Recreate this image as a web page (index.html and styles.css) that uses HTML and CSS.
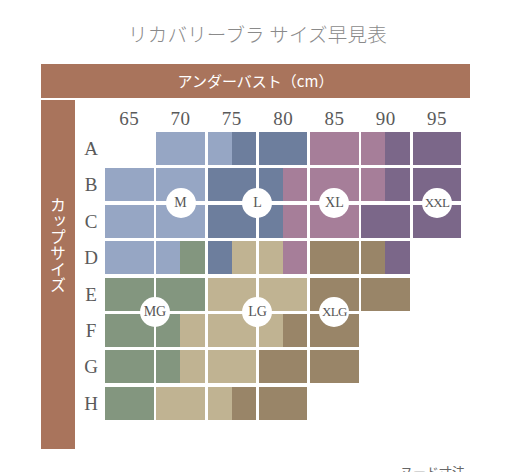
FILE: index.html
```html
<!DOCTYPE html>
<html lang="ja">
<head>
<meta charset="utf-8">
<link rel="stylesheet" href="styles.css">
</head>
<body>
<h1 class="title">リカバリーブラ サイズ早見表</h1>
<div class="chart">
  <div class="header">アンダーバスト（cm）</div>
  <div class="body">
    <div class="side"><span class="side-text">カップサイズ</span></div>
    <div class="table">
      <div></div>
      <div class="col">65</div><div class="col">70</div><div class="col">75</div><div class="col">80</div><div class="col">85</div><div class="col">90</div><div class="col">95</div>

      <div class="row">A</div>
      <div></div><div class="c m"></div><div class="c m-l"></div><div class="c l"></div><div class="c xl"></div><div class="c xl-xxl"></div><div class="c xxl"></div>

      <div class="row">B</div>
      <div class="c m"></div><div class="c m"></div><div class="c l"></div><div class="c l-xl"></div><div class="c xl"></div><div class="c xl-xxl"></div><div class="c xxl"></div>

      <div class="row">C</div>
      <div class="c m"></div><div class="c m"></div><div class="c l"></div><div class="c l-xl"></div><div class="c xl"></div><div class="c xxl"></div><div class="c xxl"></div>

      <div class="row">D</div>
      <div class="c m"></div><div class="c m-mg"></div><div class="c l-lg"></div><div class="c lg-xl"></div><div class="c xlg"></div><div class="c xlg-xxl"></div><div></div>

      <div class="row">E</div>
      <div class="c mg"></div><div class="c mg"></div><div class="c lg"></div><div class="c lg"></div><div class="c xlg"></div><div class="c xlg"></div><div></div>

      <div class="row">F</div>
      <div class="c mg"></div><div class="c mg-lg"></div><div class="c lg"></div><div class="c lg-xlg"></div><div class="c xlg"></div><div></div><div></div>

      <div class="row">G</div>
      <div class="c mg"></div><div class="c mg-lg"></div><div class="c lg"></div><div class="c xlg"></div><div class="c xlg"></div><div></div><div></div>

      <div class="row">H</div>
      <div class="c mg"></div><div class="c lg"></div><div class="c lg-xlg"></div><div class="c xlg"></div><div></div><div></div><div></div>

      <div class="badge b-m">M</div>
      <div class="badge b-l">L</div>
      <div class="badge b-xl">XL</div>
      <div class="badge b-xxl small">XXL</div>
      <div class="badge b-mg">MG</div>
      <div class="badge b-lg">LG</div>
      <div class="badge b-xlg small">XLG</div>
    </div>
  </div>
</div>
<p class="note">ヌード寸法</p>
</body>
</html>
```

FILE: styles.css
```css
:root {
  --m: #96a6c4;
  --l: #6d7e9d;
  --xl: #a67e99;
  --xxl: #7b6789;
  --mg: #83967f;
  --lg: #c0b392;
  --xlg: #998568;
  --brown: #a9745c;
}

html, body {
  margin: 0;
  padding: 0;
  background: #fff;
}

body {
  width: 512px;
  height: 472px;
  overflow: hidden;
  font-family: "Noto Sans CJK JP", "Noto Sans", sans-serif;
}

.title {
  margin: 24px 0 0;
  padding-left: 3px;
  font-size: 19.5px;
  line-height: 20px;
  font-weight: 300;
  color: #8a8a8a;
  text-align: center;
  letter-spacing: 0.2px;
}

.chart {
  margin: 20px 0 0 41px;
  width: 429px;
}

.header {
  height: 34px;
  line-height: 34px;
  background: var(--brown);
  color: #fff;
  font-size: 15px;
  text-align: center;
}

.body {
  display: flex;
  margin-top: 2px;
}

.side {
  width: 34px;
  height: 349px;
  background: var(--brown);
  display: flex;
  justify-content: center;
  padding-top: 97px;
  box-sizing: border-box;
}

.side-text {
  writing-mode: vertical-rl;
  text-orientation: upright;
  color: #fff;
  font-size: 16px;
  line-height: 16px;
  height: 96px;
}

.table {
  position: relative;
  display: grid;
  grid-template-columns: 27.3px repeat(7, 48.6px);
  grid-template-rows: 28.6px repeat(8, 33px);
  column-gap: 2.7px;
  row-gap: 3.4px;
  align-self: flex-start;
}

.col,
.row {
  font-family: "Liberation Serif", "Times New Roman", serif;
  font-size: 19px;
  line-height: 19px;
  color: #5a5a5a;
  text-align: center;
}

.col {
  padding-top: 9px;
  letter-spacing: 0.5px;
}

.row {
  display: flex;
  align-items: center;
  justify-content: center;
  padding-left: 5px;
}

.m { background: var(--m); }
.l { background: var(--l); }
.xl { background: var(--xl); }
.xxl { background: var(--xxl); }
.mg { background: var(--mg); }
.lg { background: var(--lg); }
.xlg { background: var(--xlg); }

.m-l { background: linear-gradient(90deg, var(--m) 50%, var(--l) 50%); }
.l-xl { background: linear-gradient(90deg, var(--l) 50%, var(--xl) 50%); }
.xl-xxl { background: linear-gradient(90deg, var(--xl) 50%, var(--xxl) 50%); }
.m-mg { background: linear-gradient(90deg, var(--m) 50%, var(--mg) 50%); }
.l-lg { background: linear-gradient(90deg, var(--l) 50%, var(--lg) 50%); }
.lg-xl { background: linear-gradient(90deg, var(--lg) 50%, var(--xl) 50%); }
.xlg-xxl { background: linear-gradient(90deg, var(--xlg) 50%, var(--xxl) 50%); }
.mg-lg { background: linear-gradient(90deg, var(--mg) 50%, var(--lg) 50%); }
.lg-xlg { background: linear-gradient(90deg, var(--lg) 50%, var(--xlg) 50%); }

.badge {
  position: absolute;
  inset: 0;
  margin: auto;
  width: 30px;
  height: 30px;
  border-radius: 50%;
  background: #fff;
  display: flex;
  align-items: center;
  justify-content: center;
  font-family: "Liberation Serif", "Times New Roman", serif;
  font-size: 14px;
  color: #555;
  z-index: 1;
}

.badge.small {
  font-size: 13px;
  letter-spacing: -0.7px;
}

.b-m { grid-column: 3 / span 1; grid-row: 3 / span 2; }
.b-l { grid-column: 4 / span 2; grid-row: 3 / span 2; }
.b-xl { grid-column: 6 / span 1; grid-row: 3 / span 2; }
.b-xxl { grid-column: 8 / span 1; grid-row: 3 / span 2; }
.b-mg { grid-column: 2 / span 2; grid-row: 6 / span 2; }
.b-lg { grid-column: 4 / span 2; grid-row: 6 / span 2; }
.b-xlg { grid-column: 6 / span 1; grid-row: 6 / span 2; }

.note {
  margin: 16px 0 0 400px;
  font-size: 13px;
  line-height: 13px;
  color: #666;
  white-space: nowrap;
}
```
